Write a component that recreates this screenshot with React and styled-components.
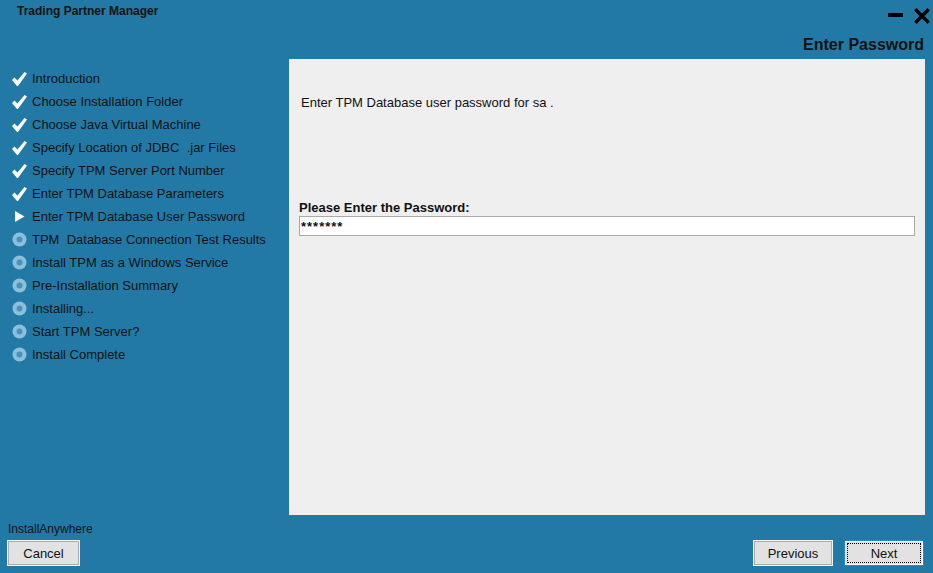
import React from "react";
import styled, { createGlobalStyle } from "styled-components";

const Global = createGlobalStyle`
  html, body { margin: 0; padding: 0; }
  body { font-family: "Liberation Sans", Arial, sans-serif; }
  * { box-sizing: border-box; }
`;

const Window = styled.div`
  width: 933px;
  height: 573px;
  background: #2379a6;
  display: flex;
  flex-direction: column;
  overflow: hidden;
  color: #111;
  font-family: "Liberation Sans", Arial, sans-serif;
`;

const TitleRow = styled.div`
  height: 30px;
  display: flex;
  justify-content: space-between;
  align-items: flex-start;
  padding: 4px 3px 0 17px;
`;

const Title = styled.div`
  font-size: 12px;
  font-weight: bold;
  line-height: 14px;
`;

const Controls = styled.div`
  display: flex;
  gap: 11px;
  margin-top: 4px;
  align-items: flex-start;
`;

const StepTitle = styled.div`
  height: 29px;
  line-height: 29px;
  text-align: right;
  font-size: 16px;
  font-weight: bold;
  padding-right: 9px;
`;

const Main = styled.div`
  display: flex;
  height: 456px;
`;

const Sidebar = styled.ul`
  width: 289px;
  flex: none;
  list-style: none;
  margin: 0;
  padding: 8px 0 0 12px;
`;

const Step = styled.li`
  height: 23px;
  display: flex;
  align-items: center;
  gap: 5px;
  font-size: 13px;
  color: #111;
  white-space: pre;
`;

const IconBox = styled.span`
  width: 15px;
  height: 15px;
  display: flex;
  align-items: center;
  justify-content: center;
  flex: none;
`;

const Panel = styled.div`
  flex: 1;
  margin-right: 8px;
  background: #efefef;
  display: flex;
  flex-direction: column;
`;

const Message = styled.div`
  font-size: 13px;
  line-height: 16px;
  margin: 36px 12px 0;
`;

const FieldLabel = styled.div`
  font-size: 13px;
  font-weight: bold;
  line-height: 16px;
  margin: 89px 10px 0;
`;

const PasswordInput = styled.div`
  height: 20px;
  margin: 0 10px;
  background: #fff;
  border: 1px solid #a9a9a9;
  font-size: 13px;
  font-weight: bold;
  line-height: 19px;
  padding-left: 1px;
  letter-spacing: 1px;
`;

const Footer = styled.div`
  height: 58px;
  display: flex;
  flex-direction: column;
  padding: 7px 9px 0 7px;
`;

const Brand = styled.div`
  font-size: 12px;
  line-height: 14px;
  padding-left: 1px;
`;

const ButtonRow = styled.div`
  display: flex;
  margin-top: 4px;
  gap: 11px;
`;

const Push = styled.div`
  flex: 1;
`;

const Button = styled.button`
  width: ${(p) => p.$w}px;
  height: 26px;
  background: #e2e2e2;
  border: 1px solid ${(p) => (p.$focused ? "#1f86dc" : "#f3f3f3")};
  box-shadow: ${(p) =>
    p.$focused ? "inset 0 0 0 1px #ffffff" : "inset 0 0 0 1px #adadad"};
  font-family: "Liberation Sans", Arial, sans-serif;
  font-size: 13px;
  color: #111;
  padding: 0;
  outline: ${(p) => (p.$focused ? "1px dotted #000" : "none")};
  outline-offset: -4px;
`;

const Check = () => (
  <svg width="15" height="14" viewBox="0 0 15 14">
    <polygon points="0,8 2.5,5.5 5.5,8.5 12.5,0 15,1.5 6,14 5,14" fill="#fff" />
  </svg>
);

const Arrow = () => (
  <svg width="10" height="11" viewBox="0 0 10 11">
    <polygon points="0,0 9.5,5.5 0,11" fill="#fff" />
  </svg>
);

const Bullet = () => (
  <svg width="15" height="15" viewBox="0 0 15 15">
    <circle cx="7.5" cy="7.5" r="7" fill="#8cbfdc" />
    <circle cx="7.5" cy="7.5" r="3" fill="#4a91bc" />
  </svg>
);

const Minimize = () => (
  <svg width="15" height="16" viewBox="0 0 15 16">
    <rect x="0" y="5" width="15" height="4" fill="#000" />
  </svg>
);

const Close = () => (
  <svg width="16" height="16" viewBox="0 0 16 16">
    <path d="M2.5 2.5 L13.5 13.5 M13.5 2.5 L2.5 13.5" stroke="#000" strokeWidth="3.4" strokeLinecap="square" />
  </svg>
);

const steps = [
  ["Introduction", "done"],
  ["Choose Installation Folder", "done"],
  ["Choose Java Virtual Machine", "done"],
  ["Specify Location of JDBC  .jar Files", "done"],
  ["Specify TPM Server Port Number", "done"],
  ["Enter TPM Database Parameters", "done"],
  ["Enter TPM Database User Password", "current"],
  ["TPM  Database Connection Test Results", "todo"],
  ["Install TPM as a Windows Service", "todo"],
  ["Pre-Installation Summary", "todo"],
  ["Installing...", "todo"],
  ["Start TPM Server?", "todo"],
  ["Install Complete", "todo"],
];

export default function App() {
  return (
    <>
      <Global />
      <Window>
        <TitleRow>
          <Title>Trading Partner Manager</Title>
          <Controls>
            <Minimize />
            <Close />
          </Controls>
        </TitleRow>
        <StepTitle>Enter Password</StepTitle>
        <Main>
          <Sidebar>
            {steps.map(([label, state]) => (
              <Step key={label}>
                <IconBox>
                  {state === "done" ? <Check /> : state === "current" ? <Arrow /> : <Bullet />}
                </IconBox>
                <span>{label}</span>
              </Step>
            ))}
          </Sidebar>
          <Panel>
            <Message>Enter TPM Database user password for sa .</Message>
            <FieldLabel>Please Enter the Password:</FieldLabel>
            <PasswordInput>*******</PasswordInput>
          </Panel>
        </Main>
        <Footer>
          <Brand>InstallAnywhere</Brand>
          <ButtonRow>
            <Button $w={73}>Cancel</Button>
            <Push />
            <Button $w={80}>Previous</Button>
            <Button $w={80} $focused>Next</Button>
          </ButtonRow>
        </Footer>
      </Window>
    </>
  );
}
